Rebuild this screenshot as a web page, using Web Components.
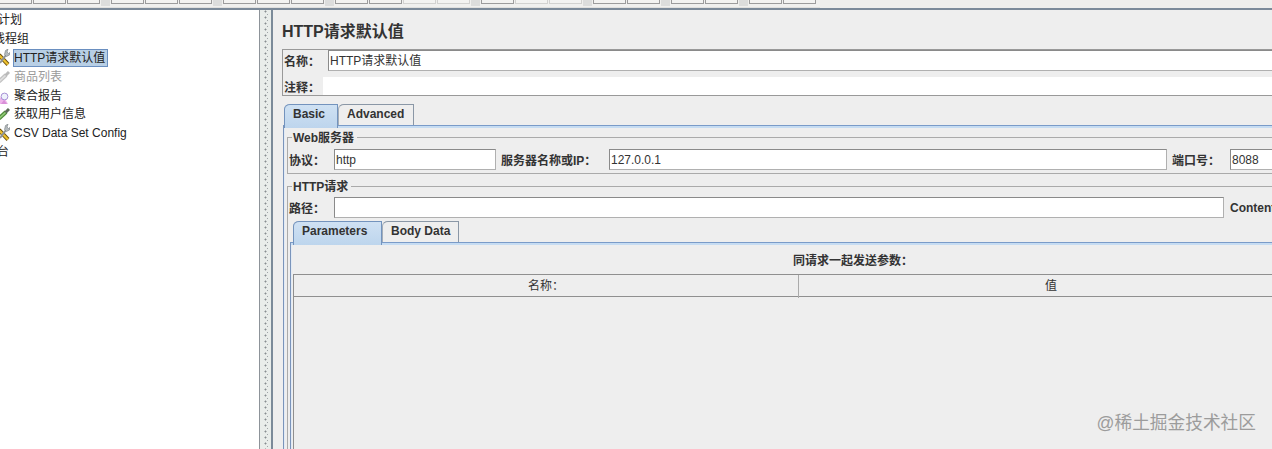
<!DOCTYPE html>
<html>
<head>
<meta charset="utf-8">
<style>
	html, body { margin: 0; height: 100%; overflow: hidden; }
	body { width: 1272px; height: 449px; font: 12px "Liberation Sans", "Noto Sans CJK SC", sans-serif; color: #333; background: #eee; }
</style>
</head>
<body>
<jm-app>
	<jm-toolbar slot="toolbar"></jm-toolbar>
	<jm-tree slot="tree">
		<jm-node label="计划" shift="-2"></jm-node>
		<jm-node label="线程组" shift="-7"></jm-node>
		<jm-node label="HTTP请求默认值" icon="wrench" selected></jm-node>
		<jm-node label="商品列表" icon="pipette" disabled></jm-node>
		<jm-node label="聚合报告" icon="chart"></jm-node>
		<jm-node label="获取用户信息" icon="pipette"></jm-node>
		<jm-node label="CSV Data Set Config" icon="wrench"></jm-node>
		<jm-node label="台" shift="-3"></jm-node>
	</jm-tree>
	<jm-panel slot="panel"></jm-panel>
	<jm-watermark slot="watermark">@稀土掘金技术社区</jm-watermark>
</jm-app>
<script>
const jmAppTemplate = document.createElement('template');
jmAppTemplate.innerHTML = `
	<style>
		:host { display: grid; grid-template-rows: 8px 2px 1fr; height: 449px; width: 1272px; overflow: hidden; background: #eee; position: relative; }
		.rule { background: #7b8a99; }
		.split { display: grid; grid-template-columns: 259px 12px 1fr; min-height: 0; }
		.divider {
			border-left: 1px solid #8d9399;
			background:
				radial-gradient(circle at 5.5px 1.5px, #878d90 .9px, transparent 1.1px) 0 0 / 100% 6px,
				radial-gradient(circle at 7.5px 4.5px, #a0a6a8 .8px, transparent 1px) 0 0 / 100% 6px,
				#e9edea;
		}
		.right { border-left: 2px solid #7b8a99; min-width: 0; overflow: hidden; }
	</style>
	<slot name="toolbar"></slot>
	<div class="rule"></div>
	<div class="split">
		<slot name="tree"></slot>
		<div class="divider"></div>
		<div class="right"><slot name="panel"></slot></div>
	</div>
	<slot name="watermark"></slot>
`;
class JmApp extends HTMLElement {
	connectedCallback() {
		this.attachShadow({ mode: 'open' }).appendChild(jmAppTemplate.content.cloneNode(true));
	}
}

const jmToolbarTemplate = document.createElement('template');
jmToolbarTemplate.innerHTML = `
	<style>
		:host { display: block; height: 8px; overflow: hidden; background: #eeeeec; }
		.strip { display: flex; gap: 1px; align-items: flex-start; background: #f0f0ee; width: 821px; height: 7px; margin-left: -1px; border-bottom: 1px solid #e0e0de; box-sizing: content-box; }
		.btn { box-sizing: border-box; width: 33px; height: 4px; border: 1px solid #9c9c9c; border-top: 0; background: #f3f3f1; flex: none; }
		.btn.off { border-color: #d2d2d0; }
		.sep { flex: none; width: 9px; height: 6px; background: #dcdddc; }
	</style>
	<div class="strip"></div>
`;
class JmToolbar extends HTMLElement {
	connectedCallback() {
		const root = this.attachShadow({ mode: 'open' });
		root.appendChild(jmToolbarTemplate.content.cloneNode(true));
		const strip = root.querySelector('.strip');
		// b = button, o = disabled button, | = separator
		'bbb|bbb|bbb|bboo|boo|bb|bb|bb'.split('').forEach(kind => {
			const el = document.createElement('div');
			el.className = kind === '|' ? 'sep' : kind === 'o' ? 'btn off' : 'btn';
			strip.appendChild(el);
		});
	}
}

const jmNodeIcons = {
	wrench: `<svg width="10" height="18" viewBox="0 0 10 18">
		<path d="M-1 6l9 9.5" stroke="#6e5310" stroke-width="4"/>
		<path d="M-1 6l9 9.5" stroke="#eec22e" stroke-width="2.2"/>
		<path d="M0 14L6 6" stroke="#8d9398" stroke-width="2"/>
		<path d="M4.5 5.5L5.5 1.5 8 0 7 3l1.5 1.5L10 3.5 9.5 6 6.5 7.5z" fill="#b4babd" stroke="#777d82" stroke-width=".6"/>
	</svg>`,
	pipette: `<svg width="10" height="18" viewBox="0 0 10 18">
		<path d="M-1 13.5L6 7" stroke="#4f8a3a" stroke-width="4"/>
		<path d="M-1 13.5L6 7" stroke="#93cc78" stroke-width="1.6"/>
		<path d="M5.5 7.5L9 4" stroke="#5c6b58" stroke-width="3"/>
	</svg>`,
	chart: `<svg width="10" height="18" viewBox="0 0 10 18">
		<path d="M-1 17V12L3 8l5 9z" fill="#eeb4ea"/>
		<circle cx="4.5" cy="9.5" r="3.4" fill="#eef2fb" stroke="#a891d6" stroke-width="1"/>
		<path d="M1 17l3-4 3 4z" fill="#d98fd8"/>
	</svg>`
};
class JmNode extends HTMLElement {
	connectedCallback() {
		const root = this.attachShadow({ mode: 'open' });
		const shift = this.getAttribute('shift');
		const icon = this.getAttribute('icon');
		root.innerHTML = `
			<style>
				:host { display: flex; align-items: center; height: 18.8px; font-size: 12px; color: #222; white-space: nowrap; }
				:host([disabled]) { color: #9a9a9a; }
				:host([disabled]) svg { filter: grayscale(1) opacity(.45); }
				.icon { width: 14px; height: 18px; flex: none; }
				svg { display: block; }
				.label { line-height: 16px; }
				:host([selected]) .label { background: #b8cfe5; border: 1px solid #6a8fc0; margin-left: -1px; padding-right: 2px; line-height: 16px; }
			</style>
			${shift ? '' : `<span class="icon">${jmNodeIcons[icon]}</span>`}
			<span class="label" style="${shift ? 'margin-left:' + shift + 'px' : ''}">${this.getAttribute('label')}</span>
		`;
	}
}

const jmTreeTemplate = document.createElement('template');
jmTreeTemplate.innerHTML = `
	<style>
		:host { display: block; background: #fff; overflow: hidden; padding-top: 1px; }
	</style>
	<slot></slot>
`;
class JmTree extends HTMLElement {
	connectedCallback() {
		this.attachShadow({ mode: 'open' }).appendChild(jmTreeTemplate.content.cloneNode(true));
	}
}

const jmTabsTemplate = document.createElement('template');
jmTabsTemplate.innerHTML = `
	<style>
		:host { display: block; }
		.bar { display: flex; height: 21px; padding-left: var(--tab-inset, 1px); position: relative; z-index: 1; }
		.tab { box-sizing: border-box; height: 21px; padding-left: 8px; border: 1px solid #8a97a6; border-left-color: #a5aeb8; border-bottom: 0; font-weight: bold; font-size: 12px; line-height: 19px; background: #eee; color: #333; border-top-left-radius: 6px 5px; white-space: nowrap; overflow: hidden; }
		.tab:first-child { height: 24px; background: linear-gradient(#cfe1f3, #bdd5ed); border-color: #7393bd; }
		.body { border-left: 1px solid #7a94bb; border-top: 1px solid #7a9bc8; box-shadow: inset 0 2px 0 #c6dcf2, inset 1px 0 0 #e2eaf4; }
	</style>
	<div class="bar"></div>
	<div class="body"><slot></slot></div>
`;
class JmTabs extends HTMLElement {
	connectedCallback() {
		const root = this.attachShadow({ mode: 'open' });
		root.appendChild(jmTabsTemplate.content.cloneNode(true));
		const bar = root.querySelector('.bar');
		this.getAttribute('tabs').split(',').forEach(item => {
			const [name, width] = item.split(':');
			const tab = document.createElement('div');
			tab.className = 'tab';
			tab.style.width = width + 'px';
			tab.textContent = name;
			bar.appendChild(tab);
		});
	}
}

const jmGroupTemplate = document.createElement('template');
jmGroupTemplate.innerHTML = `
	<style>
		:host { display: block; position: relative; border: 1px solid #aaa; border-right: 0; }
		.legend { position: absolute; left: 4px; top: -7px; padding: 0 3px 0 1px; background: #eee; font-size: 12px; font-weight: bold; line-height: 14px; color: #333; white-space: nowrap; }
	</style>
	<span class="legend"></span>
	<slot></slot>
`;
class JmGroup extends HTMLElement {
	connectedCallback() {
		const root = this.attachShadow({ mode: 'open' });
		root.appendChild(jmGroupTemplate.content.cloneNode(true));
		root.querySelector('.legend').textContent = this.getAttribute('legend');
	}
}

const jmPanelTemplate = document.createElement('template');
jmPanelTemplate.innerHTML = `
	<style>
		:host { display: block; height: 439px; overflow: hidden; box-sizing: border-box; padding: 12px 0 0 9px; }
		h1 { margin: 0 0 7px; font-size: 16px; line-height: 20px; font-weight: bold; color: #333; white-space: nowrap; }
		.lbl { font-weight: bold; font-size: 12px; color: #333; white-space: nowrap; flex: none; box-sizing: border-box; }
		.in { background: #fff; border: 1px solid #8a8a8a; border-right-color: #b0b0b0; border-bottom-color: #b0b0b0; height: 21px; box-sizing: border-box; padding: 0 1px; line-height: 21px; font-size: 12px; color: #333; white-space: nowrap; overflow: hidden; flex: none; }
		.row { display: flex; align-items: center; }
		.names { border: 1px solid #999; border-right: 0; width: 1100px; box-sizing: border-box; margin-bottom: 8px; height: 47px; }
		.names .lbl { width: 45px; padding-left: 1px; }
		.names .in { flex: 1; }
		.names .note { flex: 1; height: 18px; background: #fff; margin-left: -5px; }
		.names .row + .row { margin-top: 6px; height: 18px; }
		.tabs-outer { width: 1100px; margin-left: 1px; }
		.web { margin: 11px 0 0 3px; }
		.http { margin: 12px 0 0 3px; }
		.group-row { padding: 11px 0 3px 1px; }
		.group-row .lbl.first { width: 45px; }
		.http .group-row { padding: 10px 0 0 1px; }
		jm-tabs.inner { margin: 3px 0 0 2px; --tab-inset: 3px; height: 240px; }
		.caption { text-align: center; font-weight: bold; font-size: 12px; line-height: 14px; width: 1124px; padding-top: 11px; }
		.table { margin: 6px 0 0 2px; border-left: 1px solid #8f8f8f; height: 200px; font-size: 12px; color: #333; }
		.head { display: grid; grid-template-columns: 505px 504px; width: 1009px; box-sizing: border-box; height: 23px; border-top: 1px solid #8f8f8f; border-bottom: 1px solid #8f8f8f; line-height: 23px; text-align: center; }
		.head div:first-child { border-right: 1px solid #aaa; }
	</style>
	<h1>HTTP请求默认值</h1>
	<div class="names">
		<div class="row"><span class="lbl">名称：</span><div class="in">HTTP请求默认值</div></div>
		<div class="row"><span class="lbl">注释：</span><div class="note"></div></div>
	</div>
	<div class="tabs-outer">
		<jm-tabs tabs="Basic:54,Advanced:76">
			<jm-group class="web" legend="Web服务器">
				<div class="row group-row">
					<span class="lbl first">协议：</span>
					<div class="in" style="width:162px">http</div>
					<span class="lbl" style="margin-left:5px;width:108px">服务器名称或IP：</span>
					<div class="in" style="width:558px">127.0.0.1</div>
					<span class="lbl" style="margin-left:5px;width:58px">端口号：</span>
					<div class="in" style="width:70px">8088</div>
				</div>
			</jm-group>
			<jm-group class="http" legend="HTTP请求">
				<div class="row group-row">
					<span class="lbl first">路径：</span>
					<div class="in" style="width:890px"></div>
					<span class="lbl" style="margin-left:6px">Content</span>
				</div>
				<jm-tabs class="inner" tabs="Parameters:89,Body Data:77">
					<div class="caption">同请求一起发送参数：</div>
					<div class="table">
						<div class="head"><div>名称：</div><div>值</div></div>
					</div>
				</jm-tabs>
			</jm-group>
		</jm-tabs>
	</div>
`;
class JmPanel extends HTMLElement {
	connectedCallback() {
		this.attachShadow({ mode: 'open' }).appendChild(jmPanelTemplate.content.cloneNode(true));
	}
}

const jmWatermarkTemplate = document.createElement('template');
jmWatermarkTemplate.innerHTML = `
	<style>
		:host { position: absolute; right: 16px; bottom: 15px; font-size: 17.7px; line-height: 22px; color: #9c9c9c; white-space: nowrap; }
	</style>
	<slot></slot>
`;
class JmWatermark extends HTMLElement {
	connectedCallback() {
		this.attachShadow({ mode: 'open' }).appendChild(jmWatermarkTemplate.content.cloneNode(true));
	}
}

customElements.define('jm-app', JmApp);
customElements.define('jm-toolbar', JmToolbar);
customElements.define('jm-tree', JmTree);
customElements.define('jm-node', JmNode);
customElements.define('jm-tabs', JmTabs);
customElements.define('jm-group', JmGroup);
customElements.define('jm-panel', JmPanel);
customElements.define('jm-watermark', JmWatermark);
</script>
</body>
</html>
